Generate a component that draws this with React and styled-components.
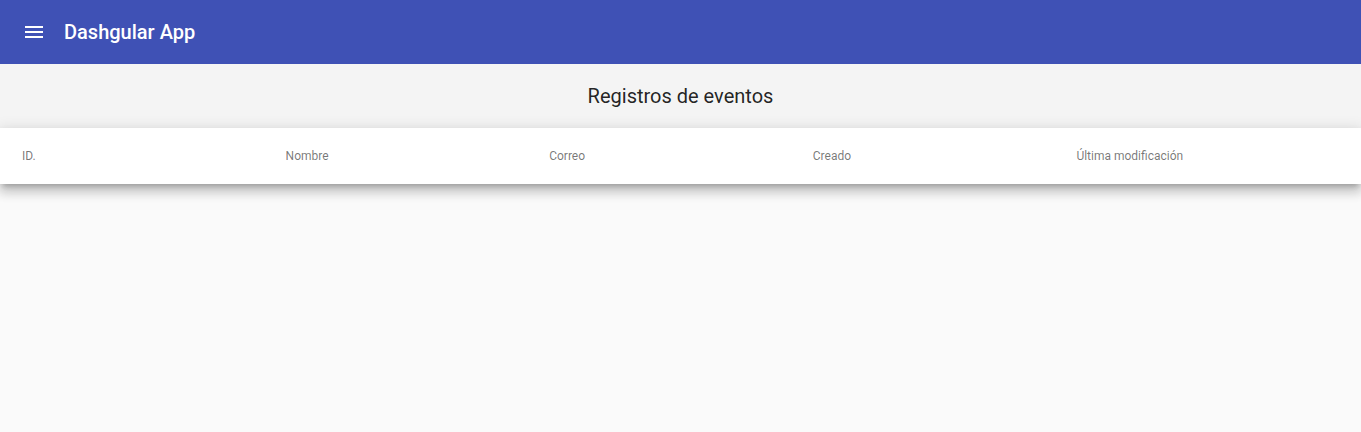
import React from "react";
import styled, { createGlobalStyle } from "styled-components";

const Global = createGlobalStyle`
  html, body { margin: 0; padding: 0; }
  body {
    background: #fafafa;
    font-family: Roboto, "Helvetica Neue", sans-serif;
    height: 432px;
    overflow: hidden;
  }
`;

const Toolbar = styled.header`
  height: 64px;
  background: #3f51b5;
  color: #fff;
  display: flex;
  align-items: center;
  padding: 0 16px 0 14px;
  box-sizing: border-box;
`;

const IconButton = styled.button`
  width: 40px;
  height: 40px;
  border: none;
  background: transparent;
  color: #fff;
  display: flex;
  align-items: center;
  justify-content: center;
  padding: 0;
  margin-right: 10px;
  cursor: pointer;
`;

const Brand = styled.span`
  font-size: 20px;
  font-weight: 500;
`;

const TitleBar = styled.section`
  height: 64px;
  background: #f4f4f4;
  display: flex;
  align-items: center;
  justify-content: center;
`;

const Title = styled.h1`
  margin: 0;
  font-size: 20px;
  font-weight: 400;
  color: rgba(0, 0, 0, 0.87);
`;

const Table = styled.div`
  background: #fff;
  box-shadow: 0 5px 5px -3px rgba(0, 0, 0, 0.2), 0 8px 10px 1px rgba(0, 0, 0, 0.14),
    0 3px 14px 2px rgba(0, 0, 0, 0.12);
  position: relative;
`;

const HeaderRow = styled.div`
  height: 56px;
  display: grid;
  grid-template-columns: repeat(5, 1fr);
  align-items: center;
  padding: 0 21px 0 22px;
`;

const HeaderCell = styled.div`
  font-size: 12px;
  font-weight: 400;
  color: rgba(0, 0, 0, 0.54);
`;

const columns = ["ID.", "Nombre", "Correo", "Creado", "Última modificación"];

export default function App() {
  return (
    <>
      <Global />
      <Toolbar>
        <IconButton aria-label="menu">
          <svg width="24" height="24" viewBox="0 0 24 24" fill="currentColor">
            <path d="M3 18h18v-2H3v2zm0-5h18v-2H3v2zm0-7v2h18V6H3z" />
          </svg>
        </IconButton>
        <Brand>Dashgular App</Brand>
      </Toolbar>
      <TitleBar>
        <Title>Registros de eventos</Title>
      </TitleBar>
      <Table>
        <HeaderRow>
          {columns.map((c) => (
            <HeaderCell key={c}>{c}</HeaderCell>
          ))}
        </HeaderRow>
      </Table>
    </>
  );
}
